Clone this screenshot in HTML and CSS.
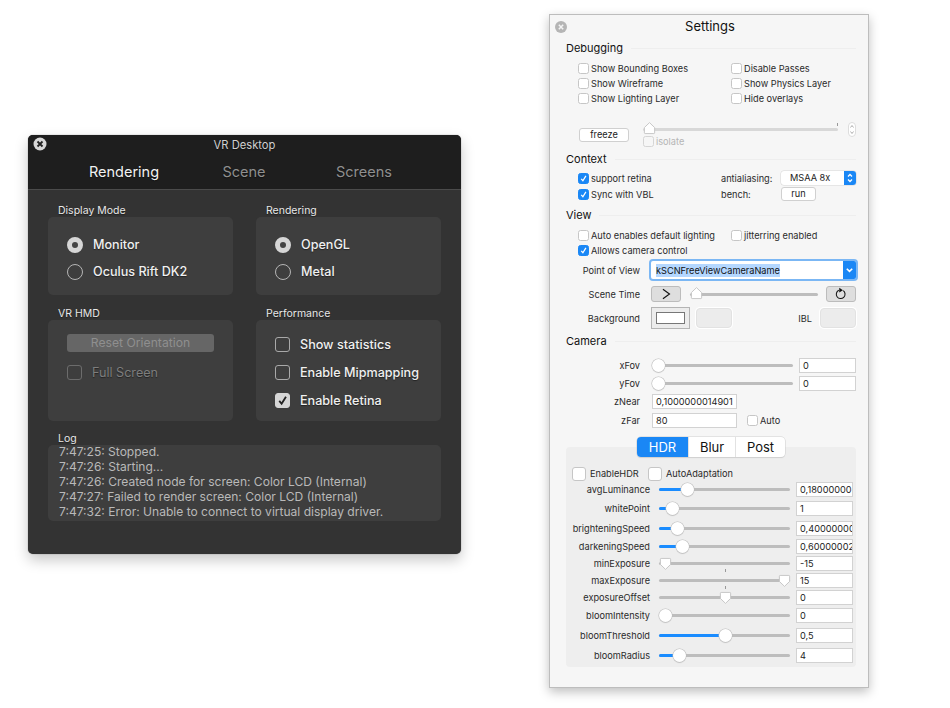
FILE: index.html
```html
<!DOCTYPE html>
<html lang="en">
<head>
<meta charset="utf-8">
<title>VR Desktop and Settings</title>
<link rel="stylesheet" href="styles.css">
</head>
<body>
<svg class="defs" width="0" height="0" aria-hidden="true">
  <symbol id="tick" viewBox="0 0 12 12"><path d="M3 6.4 5.2 9 9.2 2.6" fill="none" stroke="currentColor" stroke-width="1.7"/></symbol>
  <symbol id="up" viewBox="0 0 14 14"><path d="M7 1.2 12.5 6.5V12.2a.8.8 0 0 1-.8.8H2.300a.8.8 0 0 1-.8-.8V6.500Z" fill="#fff" stroke="#c4c4c4"/></symbol>
  <symbol id="down" viewBox="0 0 14 14"><path d="M7 12.800 12.500 7.500V1.800a.8.8 0 0 0-.8-.8H2.300a.8.8 0 0 0-.8.8V7.500Z" fill="#fff" stroke="#c4c4c4"/></symbol>
</svg>

<section class="win-dark">
  <header class="dark-head">
    <svg class="dark-close" viewBox="0 0 14 14"><circle cx="7" cy="7" r="6.500" fill="#d8d8d8"/><path d="M4.500 4.500 9.500 9.500M9.500 4.500 4.500 9.500" stroke="#222" stroke-width="1.800"/></svg>
    <div class="dark-title">VR Desktop</div>
    <nav class="dark-tabs"><span class="dark-tab on">Rendering</span><span class="dark-tab">Scene</span><span class="dark-tab">Screens</span></nav>
  </header>
  <div class="dark-grid">
    <div>
      <h3 class="g-label">Display Mode</h3>
      <div class="g-box box-a">
        <div class="d-row"><i class="radio on"></i><span>Monitor</span></div>
        <div class="d-row"><i class="radio"></i><span>Oculus Rift DK2</span></div>
      </div>
    </div>
    <div>
      <h3 class="g-label">Rendering</h3>
      <div class="g-box box-a">
        <div class="d-row"><i class="radio on"></i><span>OpenGL</span></div>
        <div class="d-row"><i class="radio"></i><span>Metal</span></div>
      </div>
    </div>
    <div>
      <h3 class="g-label">VR HMD</h3>
      <div class="g-box box-b">
        <div class="reset">Reset Orientation</div>
        <div class="d-row off"><i class="d-check"></i><span>Full Screen</span></div>
      </div>
    </div>
    <div>
      <h3 class="g-label">Performance</h3>
      <div class="g-box box-c">
        <div class="d-row tall"><i class="d-check"></i><span>Show statistics</span></div>
        <div class="d-row tall"><i class="d-check"></i><span>Enable Mipmapping</span></div>
        <div class="d-row tall"><i class="d-check on"><svg><use href="#tick"/></svg></i><span>Enable Retina</span></div>
      </div>
    </div>
  </div>
  <h3 class="g-label log-label">Log</h3>
  <div class="g-box log">
    <div>7:47:25: Stopped.</div>
    <div>7:47:26: Starting...</div>
    <div>7:47:26: Created node for screen: Color LCD (Internal)</div>
    <div>7:47:27: Failed to render screen: Color LCD (Internal)</div>
    <div>7:47:32: Error: Unable to connect to virtual display driver.</div>
  </div>
</section>

<section class="win-light">
  <svg class="light-close" viewBox="0 0 12 12"><circle cx="6" cy="6" r="6" fill="#b5b5b5"/><path d="M3.800 3.800 8.200 8.200M8.200 3.800 3.800 8.200" stroke="#f4f4f4" stroke-width="1.500"/></svg>
  <div class="light-title">Settings</div>

  <h4 class="sec">Debugging</h4>
  <div class="checks debug">
    <label class="c"><i class="box"></i>Show Bounding Boxes</label><label class="c"><i class="box"></i>Disable Passes</label>
    <label class="c"><i class="box"></i>Show Wireframe</label><label class="c"><i class="box"></i>Show Physics Layer</label>
    <label class="c"><i class="box"></i>Show Lighting Layer</label><label class="c"><i class="box"></i>Hide overlays</label>
  </div>
  <div class="freeze-row">
    <div class="btn freeze">freeze</div>
    <div class="freeze-mid">
      <div class="slider s195"><svg class="th-poly up-first"><use href="#up"/></svg><i class="mark end"></i></div>
      <label class="c dim"><i class="box"></i>isolate</label>
    </div>
    <svg class="stepper" viewBox="0 0 8 15"><rect x=".5" y=".5" width="7" height="14" rx="3.500" fill="#fff" stroke="#ddd"/><path d="M2.500 5.500 4 3.500 5.500 5.500M2.500 9.500 4 11.500 5.500 9.500" fill="none" stroke="#999" stroke-width=".8"/></svg>
  </div>

  <h4 class="sec sec-context">Context</h4>
  <div class="ctx">
    <label class="c"><i class="box on"><svg><use href="#tick"/></svg></i>support retina</label>
    <span class="c-label">antialiasing:</span>
    <div class="popup">MSAA 8x<span class="pop-arrows"><svg viewBox="0 0 10 14"><path d="M3 5.500 5 3.500 7 5.500M3 8.500 5 10.500 7 8.500" fill="none" stroke="#fff" stroke-width="1.300"/></svg></span></div>
    <label class="c"><i class="box on"><svg><use href="#tick"/></svg></i>Sync with VBL</label>
    <span class="c-label">bench:</span>
    <div class="btn run">run</div>
  </div>

  <h4 class="sec sec-view">View</h4>
  <div class="checks view">
    <label class="c"><i class="box"></i>Auto enables default lighting</label><label class="c"><i class="box"></i>jitterring enabled</label>
    <label class="c"><i class="box on"><svg><use href="#tick"/></svg></i>Allows camera control</label>
  </div>
  <div class="f-row pov">
    <span class="f-label">Point of View</span>
    <div class="combo"><span class="combo-text"><mark>kSCNFreeViewCameraName</mark></span><span class="combo-btn"><svg viewBox="0 0 12 14"><path d="M3.500 5.800 6 8.300 8.500 5.800" fill="none" stroke="#fff" stroke-width="1.500"/></svg></span></div>
  </div>
  <div class="f-row scene">
    <span class="f-label">Scene Time</span>
    <div class="gbtn"><svg viewBox="0 0 30 16"><path d="M11.500 2.500 19 8 11.500 13.500" fill="none" stroke="#111" stroke-width="1.300"/></svg></div>
    <div class="slider s128"><svg class="th-poly up-second"><use href="#up"/></svg></div>
    <div class="gbtn"><svg viewBox="0 0 30 16"><path d="M17.600 4.200A5 5 0 1 1 12.500 3.700" fill="none" stroke="#111" stroke-width="1.200"/><path d="M13 .8 17.200 3.600 13 6.200Z" fill="#111"/></svg></div>
  </div>
  <div class="f-row bg">
    <span class="f-label">Background</span>
    <div class="well-main"><i></i></div>
    <div class="well w36"></div>
    <span class="ibl">IBL</span>
    <div class="well w36 last"></div>
  </div>

  <h4 class="sec sec-cam">Camera</h4>
  <div class="f-row fov first">
    <span class="f-label">xFov</span>
    <div class="slider s141"><i class="th" style="left:0px"></i></div>
    <div class="inp i57">0</div>
  </div>
  <div class="f-row fov">
    <span class="f-label">yFov</span>
    <div class="slider s141"><i class="th" style="left:0px"></i></div>
    <div class="inp i57">0</div>
  </div>
  <div class="f-row fov">
    <span class="f-label">zNear</span>
    <div class="inp i85">0,1000000014901</div>
  </div>
  <div class="f-row fov far">
    <span class="f-label">zFar</span>
    <div class="inp i85">80</div>
    <label class="c auto"><i class="box"></i>Auto</label>
  </div>

  <div class="hdr">
    <div class="segs"><span class="seg on">HDR</span><span class="seg s-blur">Blur</span><span class="seg s-post">Post</span></div>
    <div class="hdr-checks">
      <label class="c big"><i class="box"></i>EnableHDR</label>
      <label class="c big"><i class="box"></i>AutoAdaptation</label>
    </div>
    <div class="h-rows">
      <div class="h-row"><span class="h-label">avgLuminance</span><div class="slider s131"><b style="width:28px"></b><i class="th" style="left:22px"></i></div><div class="inp i57">0,18000000</div></div>
      <div class="h-row"><span class="h-label">whitePoint</span><div class="slider s131"><b style="width:13px"></b><i class="th" style="left:7px"></i></div><div class="inp i57">1</div></div>
      <div class="h-row"><span class="h-label">brighteningSpeed</span><div class="slider s131"><b style="width:18px"></b><i class="th" style="left:12px"></i></div><div class="inp i57">0,40000000</div></div>
      <div class="h-row"><span class="h-label">darkeningSpeed</span><div class="slider s131"><b style="width:23px"></b><i class="th" style="left:17px"></i></div><div class="inp i57">0,60000002</div></div>
      <div class="h-row"><span class="h-label">minExposure</span><div class="slider s131"><svg class="th-down" style="left:0px"><use href="#down"/></svg></div><div class="inp i57">-15</div></div>
      <div class="h-row"><span class="h-label">maxExposure</span><div class="slider s131"><i class="mark mid"></i><svg class="th-down" style="left:119px"><use href="#down"/></svg></div><div class="inp i57">15</div></div>
      <div class="h-row"><span class="h-label">exposureOffset</span><div class="slider s131"><i class="mark mid"></i><svg class="th-down" style="left:60px"><use href="#down"/></svg></div><div class="inp i57">0</div></div>
      <div class="h-row"><span class="h-label">bloomIntensity</span><div class="slider s131"><i class="th" style="left:0px"></i></div><div class="inp i57">0</div></div>
      <div class="h-row"><span class="h-label">bloomThreshold</span><div class="slider s131"><b style="width:66px"></b><i class="th" style="left:60px"></i></div><div class="inp i57">0,5</div></div>
      <div class="h-row"><span class="h-label">bloomRadius</span><div class="slider s131"><b style="width:20px"></b><i class="th" style="left:14px"></i></div><div class="inp i57">4</div></div>
    </div>
  </div>
</section>
</body>
</html>
```
FILE: styles.css
```css
* { box-sizing: border-box; }
html, body { margin: 0; padding: 0; background: #fff; }
body { width: 950px; height: 708px; overflow: hidden; position: relative; font-family: "Inter", "Liberation Sans", sans-serif; }
.defs { position: absolute; }
h3, h4 { margin: 0; font-weight: 400; }

/* Dark window */
.win-dark { position: absolute; left: 28px; top: 135px; width: 433px; height: 419px; background: #333; border-radius: 5px; box-shadow: 0 0 1px rgba(0,0,0,.6), 0 6px 14px rgba(0,0,0,.22); color: #eee; text-shadow: 0 1px 1px rgba(0,0,0,.45); }
.dark-head { position: relative; height: 55px; background: #1e1e1e; border-bottom: 1px solid #4b4b4b; border-radius: 5px 5px 0 0; }
.dark-close { position: absolute; left: 5px; top: 2px; width: 14px; height: 14px; }
.dark-title { height: 20px; line-height: 20px; text-align: center; font-size: 11.200px; color: #d0d0d0; }
.dark-tabs { display: grid; grid-template-columns: repeat(3, 120px); padding-left: 36px; margin-top: 6px; }
.dark-tab { text-align: center; font-size: 14.500px; line-height: 22px; color: #8f8f8f; }
.dark-tab.on { color: #f2f2f2; }
.dark-grid { display: grid; grid-template-columns: 185px 185px; column-gap: 23px; row-gap: 12px; padding: 14px 0 0 20px; }
.g-label { height: 13px; line-height: 13px; padding-left: 10px; font-size: 10.500px; color: #e8e8e8; }
.g-box { background: #3e3e3e; border-radius: 5px; padding-left: 19px; }
.box-a { height: 78px; padding-top: 14px; }
.box-b { height: 101px; padding-top: 14px; }
.box-c { height: 101px; padding-top: 10px; }
.d-row { display: flex; align-items: center; height: 27px; font-size: 12.600px; font-weight: 500; color: #f0f0f0; }
.d-row.tall { height: 28px; }
.d-row.off { margin-top: 7px; height: 27px; color: #7d7d7d; font-weight: 400; }
.radio { width: 16px; height: 16px; margin-right: 10px; border-radius: 50%; border: 1px solid #b5b5b5; flex: none; }
.radio.on { border: 5px solid #d6d6d6; background: #444; }
.d-check { width: 15px; height: 15px; margin-right: 10px; border: 1px solid #a9a9a9; border-radius: 3px; flex: none; color: #222; }
.d-row.off .d-check { border-color: #6c6c6c; }
.d-check.on { background: #d6d6d6; border-color: #d6d6d6; }
.d-check svg { display: block; width: 13px; height: 13px; }
.reset { width: 147px; height: 18px; line-height: 18px; text-align: center; background: #666; border-radius: 3px; font-size: 12.200px; color: #8f8f8f; text-shadow: none; }
.log-label { margin: 11px 0 0 20px; }
.log { margin-left: 20px; width: 393px; height: 76px; padding: 0 0 0 11px; overflow: hidden; font-size: 12.050px; line-height: 15px; color: #b9b9b9; text-shadow: none; white-space: nowrap; }
.log div:first-child { margin-top: -1px; }

/* Light window */
.win-light { position: absolute; left: 549px; top: 14px; width: 320px; height: 674px; padding: 0 12px 0 16px; background: #f6f6f6; border: 1px solid #bdbdbd; box-shadow: 0 4px 10px rgba(0,0,0,.25); color: #2a2a2a; font-size: 9.200px; }
.light-close { position: absolute; left: 5px; top: 6px; width: 12px; height: 12px; }
.light-title { height: 27px; line-height: 22px; padding-right: 2px; text-align: center; font-size: 13px; color: #111; }
.sec { display: flex; align-items: center; gap: 8px; height: 14px; padding-bottom: 2px; font-size: 11px; color: #111; }
.sec::after { content: ""; flex: 1; height: 1px; background: #eeeeee; }
.c { display: flex; align-items: center; white-space: nowrap; }
.box { flex: none; width: 11px; height: 11px; margin-right: 2px; background: #fff; border: 1px solid #c6c6c6; border-radius: 2.500px; color: #fff; }
.box.on { background: #1a87f5; border-color: #1a87f5; }
.box svg { display: block; width: 9px; height: 9px; }
.checks { display: grid; grid-template-columns: 153px auto; grid-auto-rows: 15px; padding-left: 12px; align-items: center; }
.debug { margin-top: 5px; }
.view { margin-top: 5px; }
.btn { height: 14px; line-height: 12px; text-align: center; background: #fff; border: 1px solid #d0d0d0; border-radius: 3px; color: #222; }
.freeze-row { display: flex; height: 30px; margin-top: 15px; }
.freeze { width: 50px; margin: 7px 0 0 13px; }
.freeze-mid { width: 195px; margin-left: 14px; padding-top: 7px; }
.slider { position: relative; height: 3px; background: #bdbdbd; border-radius: 2px; flex: none; }
.slider b { position: absolute; left: 0; top: 0; height: 3px; background: #1a8cff; border-radius: 2px 0 0 2px; }
.s195 { width: 195px; background: #d8d8d8; }
.s128 { width: 128px; margin: 0 8px 0 9px; }
.s141 { width: 141px; margin: 0 6px 0 1px; background: #bdbdbd; }
.s131 { width: 131px; margin: 0 6px 0 9px; }
.th { position: absolute; top: -5px; width: 13px; height: 13px; background: #fff; border-radius: 50%; box-shadow: 0 0 0 .5px #bdbdbd, 0 1px 1px rgba(0,0,0,.15); }
.th-poly, .th-down { position: absolute; width: 13px; height: 14px; }
.th-poly { top: -7px; }
.up-first { left: 0; }
.up-second { left: 0; }
.th-down { top: -5px; }
.mark { position: absolute; width: 1px; height: 3px; background: #999; }
.mark.end { right: 0; top: -5px; }
.mark.mid { left: 66px; top: -10px; }
.dim { margin-top: 5px; color: #b5b5b5; }
.dim .box { background: transparent; border-color: #d5d5d5; }
.stepper { width: 8px; height: 15px; margin: 1px 0 0 10px; flex: none; }
.sec-context { margin-top: 2px; }
.ctx { display: grid; grid-template-columns: 143px 60px auto; grid-auto-rows: 16px; margin-top: 3px; padding-left: 12px; align-items: center; }
.c-label { white-space: nowrap; }
.popup { position: relative; width: 75px; height: 14px; line-height: 14px; padding-left: 9px; background: #fff; border-radius: 3px; box-shadow: 0 0 0 .5px #d5d5d5; color: #222; }
.pop-arrows { position: absolute; right: 0; top: 0; width: 12px; height: 14px; background: #1a87f5; border-radius: 0 3px 3px 0; }
.pop-arrows svg { display: block; width: 12px; height: 14px; }
.run { width: 35px; }
.sec-view { margin-top: 7px; }
.f-row { display: flex; align-items: center; }
.f-label { flex: none; width: 74px; text-align: right; }
.pov { height: 18px; margin-top: 3px; }
.combo { display: flex; width: 206px; height: 18px; margin-left: 11px; background: #fff; border-radius: 2px; box-shadow: 0 0 0 2px #7bb7f4; }
.combo-text { flex: 1; padding: 0 0 0 5px; line-height: 19px; color: #111; overflow: hidden; white-space: nowrap; }
.combo-text mark { background: #b4d7ff; color: #111; padding: 1px 0; }
.combo-btn { width: 13px; background: #1a87f5; border-radius: 0 2px 2px 0; }
.combo-btn svg { display: block; width: 13px; height: 18px; }
.scene { height: 16px; margin-top: 7px; }
.gbtn { flex: none; width: 30px; height: 16px; background: #dedede; border: 1px solid #bcbcbc; border-radius: 3px; }
.scene .gbtn:nth-of-type(1) { margin-left: 11px; }
.gbtn svg { display: block; width: 28px; height: 14px; }
.bg { height: 22px; margin-top: 5px; }
.well-main { flex: none; width: 39px; height: 22px; margin: 0 6px 0 11px; padding: 4px; background: #ececec; border: 1px solid #b4b4b4; }
.well-main i { display: block; height: 12px; background: #fff; border: 1px solid #777; }
.well { flex: none; height: 20px; background: #ececec; border: 1px solid #e2e2e2; border-radius: 4px; box-shadow: 0 0 0 1px #fff; }
.w36 { width: 36px; }
.ibl { width: 80px; text-align: right; margin-right: 8px; }
.sec-cam { margin-top: 6px; }
.fov { height: 15px; margin-top: 3px; }
.fov.first { margin-top: 9px; }
.fov.far { margin-top: 4px; }
.fov .slider { margin-left: 12px; }
.inp { flex: none; height: 15px; line-height: 14px; padding-left: 3px; background: #fff; border: 1px solid #d2d2d2; overflow: hidden; white-space: nowrap; color: #222; }
.i57 { width: 57px; }
.i85 { width: 85px; margin-left: 12px; }
.auto { margin-left: 10px; }
.hdr { display: flow-root; height: 220px; margin: 19px 0 0; background: #eeeeee; border-radius: 4px; }
.segs { display: flex; width: 148px; height: 20px; margin: -10px auto 0; background: #fff; border-radius: 4px; box-shadow: 0 0 0 .5px #cfcfcf, 0 1px 1px rgba(0,0,0,.12); font-size: 13px; line-height: 20px; text-align: center; color: #111; }
.seg { width: 47px; border-left: 1px solid #e2e2e2; }
.seg.on { width: 51px; background: #1a87f5; border: 0; border-radius: 4px 0 0 4px; color: #fff; }
.s-post { width: 50px; }
.hdr-checks { display: flex; height: 13px; margin-top: 10px; padding-left: 6px; }
.big .box { width: 14px; height: 14px; margin-right: 4px; border-radius: 3px; }
.big:nth-child(1) { width: 76px; }
.h-rows { display: grid; grid-template-rows: 18px 20px 20px 16px 18px 16px 18px 18px 22px 18px; }
.h-row { display: flex; align-items: center; }
.h-label { flex: none; width: 84px; text-align: right; white-space: nowrap; }
```
